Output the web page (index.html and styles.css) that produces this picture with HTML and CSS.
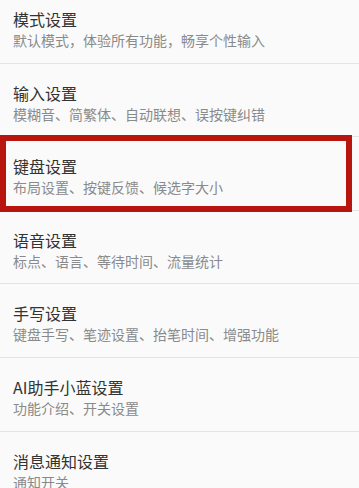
FILE: index.html
```html
<!DOCTYPE html>
<html lang="zh-CN">
<head>
<meta charset="utf-8">
<link rel="stylesheet" href="styles.css">
</head>
<body>
<ul class="list">
  <li class="item"><div class="title">模式设置</div><div class="sub">默认模式，体验所有功能，畅享个性输入</div></li>
  <li class="item"><div class="title">输入设置</div><div class="sub">模糊音、简繁体、自动联想、误按键纠错</div></li>
  <li class="item marked"><div class="title">键盘设置</div><div class="sub">布局设置、按键反馈、候选字大小</div></li>
  <li class="item"><div class="title">语音设置</div><div class="sub">标点、语言、等待时间、流量统计</div></li>
  <li class="item"><div class="title">手写设置</div><div class="sub">键盘手写、笔迹设置、抬笔时间、增强功能</div></li>
  <li class="item"><div class="title">AI助手小蓝设置</div><div class="sub">功能介绍、开关设置</div></li>
  <li class="item"><div class="title">消息通知设置</div><div class="sub">通知开关</div></li>
</ul>
</body>
</html>
```
FILE: styles.css
```css
html, body {
  margin: 0;
  padding: 0;
  background: #fafafa;
  overflow: hidden;
}
body {
  font-family: "Noto Sans CJK SC", "Noto Sans", sans-serif;
}
.list {
  list-style: none;
  margin: -10px 0 0 0;
  padding: 0;
}
.item {
  position: relative;
  padding: 18px 13px 12.6px 13px;
  border-bottom: 1px solid #e3e3e3;
  height: 42px;
}
.title {
  font-size: 16px;
  line-height: 22px;
  color: #333333;
}
.sub {
  font-size: 14px;
  line-height: 20px;
  color: #8a8a8a;
}
.marked::after {
  content: "";
  position: absolute;
  left: 0;
  top: -2px;
  width: 352px;
  height: 77px;
  box-sizing: border-box;
  border: 6px solid #b8150f;
}
```
